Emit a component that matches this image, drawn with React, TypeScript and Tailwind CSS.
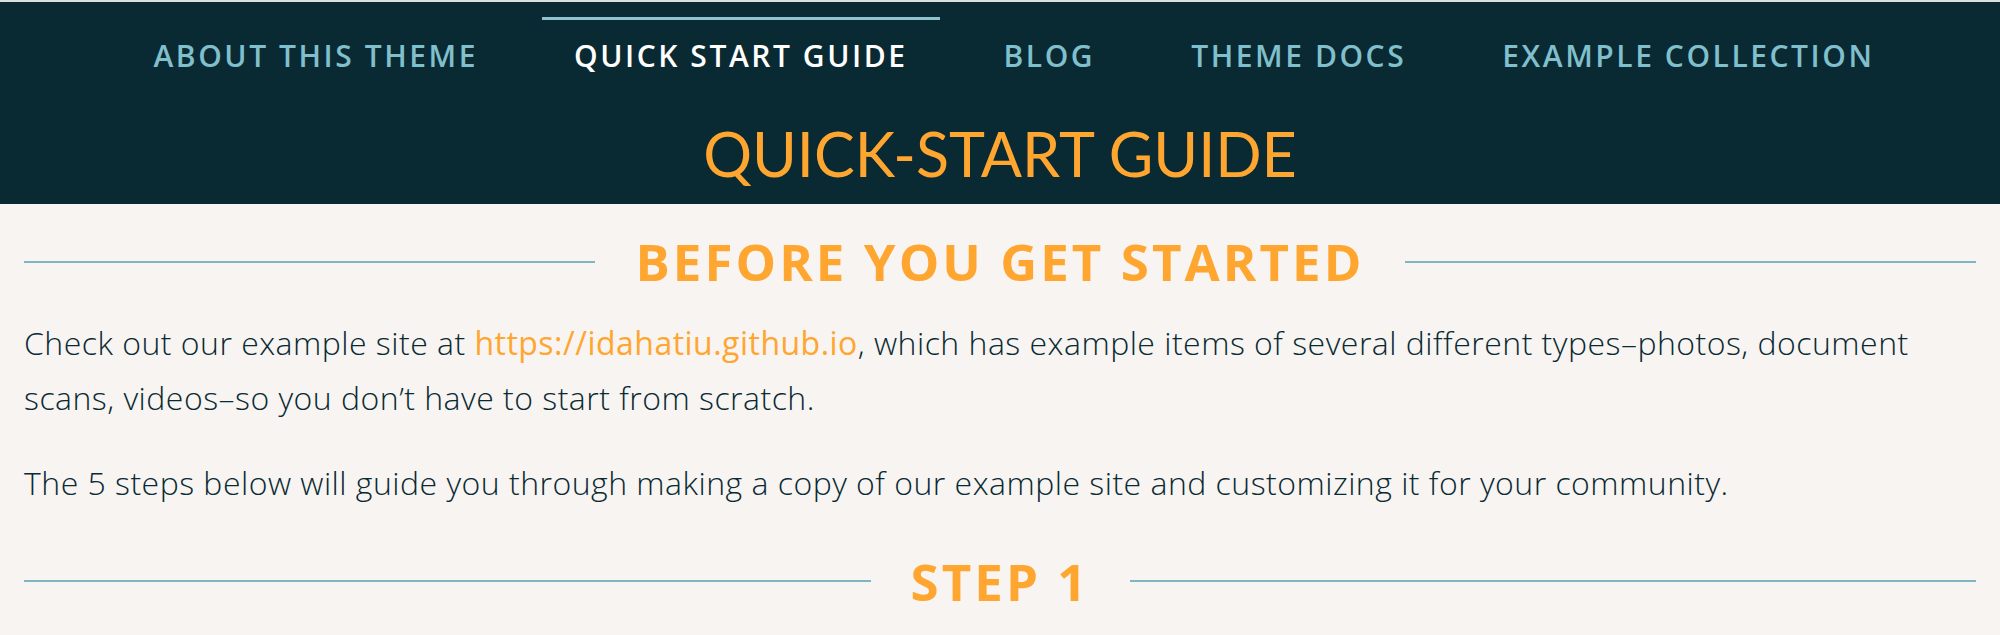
import React from "react";

const navItems = [
  { label: "About this theme", active: false },
  { label: "Quick start guide", active: true },
  { label: "Blog", active: false },
  { label: "Theme docs", active: false },
  { label: "Example collection", active: false },
];

const SectionHeading = ({ children }: { children: React.ReactNode }) => (
  <div className="flex items-center gap-10">
    <div className="h-[2px] flex-1 bg-[#7fb6c4]" />
    <h2 className="font-['Open_Sans',sans-serif] text-[51px] leading-[1.2] font-bold uppercase tracking-[0.06em] text-[#ffa630]">
      {children}
    </h2>
    <div className="h-[2px] flex-1 bg-[#7fb6c4]" />
  </div>
);

export default function App() {
  return (
    <div className="min-h-screen bg-[#f7f4f2] font-['Open_Sans','Noto_Sans',sans-serif]">
      <header className="border-t-2 border-[#dedede] bg-[#0a2a33] pb-[14px]">
        <nav className="flex justify-center gap-8 pl-[28px] pt-[15px]">
          {navItems.map((item) => (
            <a
              key={item.label}
              href="#"
              className={`border-t-[3px] px-8 pt-[13px] text-[30px] leading-[1.5] font-semibold uppercase tracking-[0.085em] ${
                item.active ? "border-[#8cc3cf] text-white" : "border-transparent text-[#80bfcc]"
              }`}
            >
              {item.label}
            </a>
          ))}
        </nav>
        <h1 className="mt-[39px] text-center font-['Lato',sans-serif] text-[61px] leading-[1.2] font-normal uppercase text-[#ffa630]">
          Quick-start guide
        </h1>
      </header>

      <main className="px-6 pt-[27px] text-[32px] leading-[1.7] font-light tracking-[0.015em] text-[#0a2a33]">
        <SectionHeading>Before you get started</SectionHeading>
        <p className="mt-[24px]">
          Check out our example site at{" "}
          <a href="#" className="font-normal text-[#ffa630]">
            https://idahatiu.github.io
          </a>
          , which has example items of several different types–photos, document scans, videos–so you don’t have to
          start from scratch.
        </p>
        <p className="mt-[31px]">
          The 5 steps below will guide you through making a copy of our example site and customizing it for your
          community.
        </p>
        <div className="mt-[40px]">
          <SectionHeading>Step 1</SectionHeading>
        </div>
      </main>
    </div>
  );
}
